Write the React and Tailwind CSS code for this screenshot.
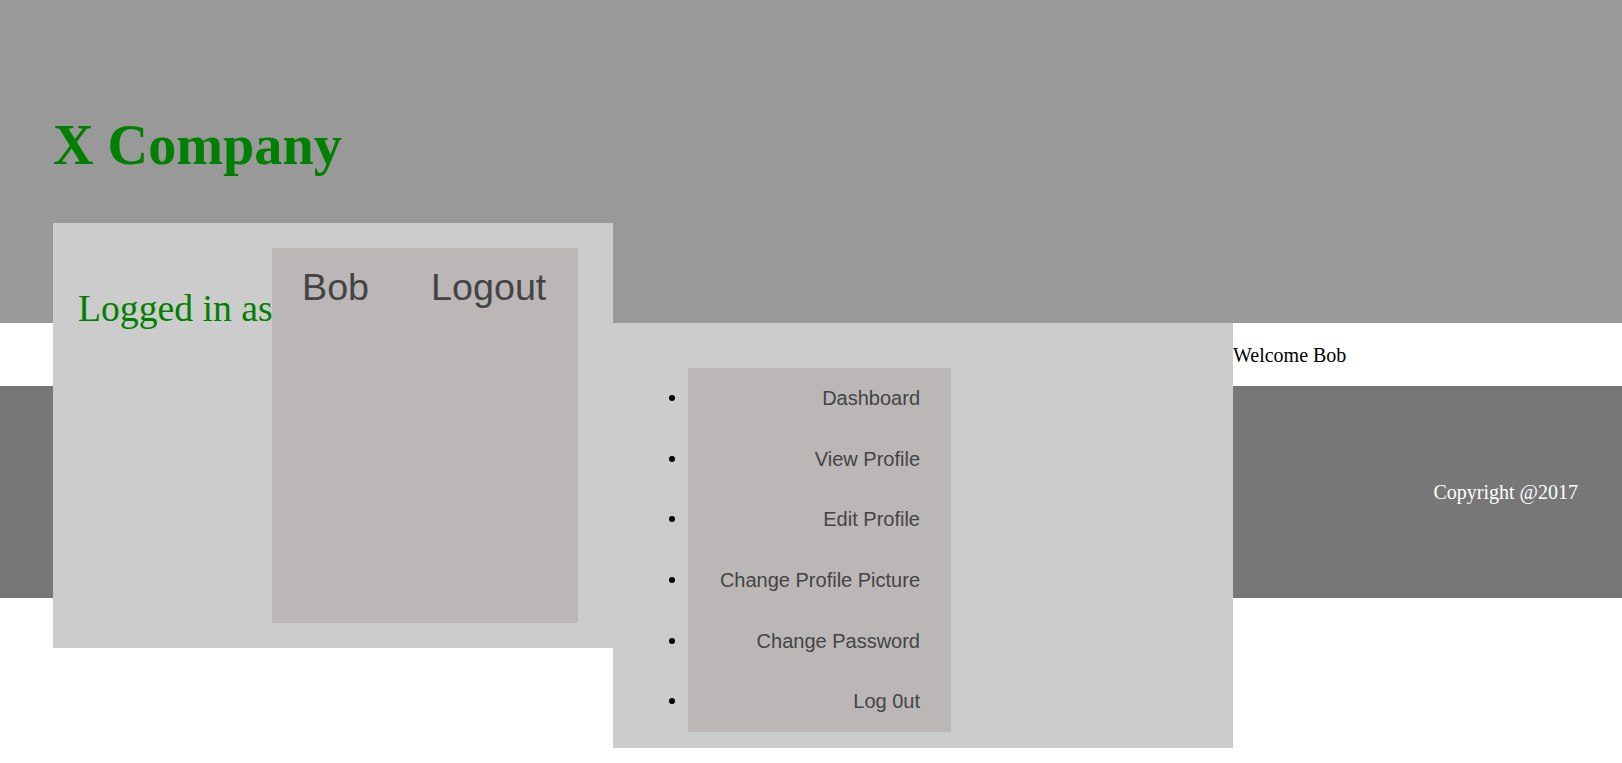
import React from 'react';

const menuItems = ['Dashboard', 'View Profile', 'Edit Profile', 'Change Profile Picture', 'Change Password', 'Log 0ut'];

const App = () => {
  return (
    <div className="grid grid-cols-[53px_560px_620px_1fr] grid-rows-[223px_100px_63px_212px_50px_100px] bg-white font-['Liberation_Serif',serif]">
      {/* header */}
      <header className="col-span-full row-start-1 row-span-2 bg-[#999999]">
        <h1 className="mt-[113px] ml-[53px] text-[56.2px] leading-[64px] font-bold text-[#008000]">X Company</h1>
      </header>

      {/* welcome strip */}
      <div className="col-span-full row-start-3 bg-white"></div>
      <div className="col-start-4 row-start-3 flex items-center text-[20px] text-black">Welcome Bob</div>

      {/* footer */}
      <footer className="col-span-full row-start-4 flex items-center justify-end bg-[#777777] pr-[44px] text-[20px] text-white">
        Copyright @2017
      </footer>

      {/* login box */}
      <div className="col-start-2 row-start-2 row-span-4 flex items-start bg-[#cccccc] pl-[25px] pt-[25px]">
        <p className="mt-[37.6px] w-[194px] whitespace-nowrap text-[37.7px] leading-[normal] text-[#008000]">Logged in as</p>
        <div className="flex h-[375px] w-[306px] items-start gap-[62px] bg-[#bbb7b6] pl-[30px] pt-[18.3px] font-['Liberation_Sans',Arial,sans-serif] text-[37.7px] leading-[normal] text-[#444444]">
          <span>Bob</span>
          <span>Logout</span>
        </div>
      </div>

      {/* side menu */}
      <div className="col-start-3 row-start-3 row-span-4 bg-[#cccccc] pl-[56px] pt-[45px]">
        <ul className="flex flex-col">
          {menuItems.map((item) => (
            <li key={item} className="flex h-[60.6px] items-center">
              <span className="h-[6px] w-[6px] rounded-full bg-black"></span>
              <div className="ml-[13px] flex h-full w-[263px] items-center justify-end bg-[#bbb7b6] pr-[31px] font-['Liberation_Sans',Arial,sans-serif] text-[20px] text-[#444444]">
                {item}
              </div>
            </li>
          ))}
        </ul>
      </div>
    </div>
  );
};

export default App;
